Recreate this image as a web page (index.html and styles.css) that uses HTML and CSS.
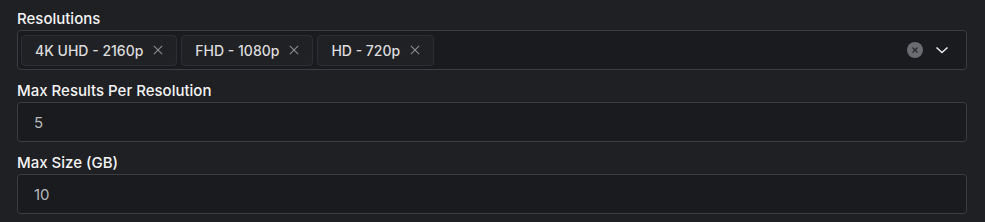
FILE: index.html
```html
<!DOCTYPE html>
<html lang="en">
<head>
	<title>Settings</title>
	<meta charset="UTF-8">
	<link rel="stylesheet" href="styles.css">
</head>
<body>
	<div class="polje">
		<label class="naziv">Resolutions</label>
		<div class="unos multi">
			<div class="tagovi">
				<span class="tag">4K UHD - 2160p
					<svg class="ukloni" viewBox="0 0 12 12"><path d="M1 1L11 11M11 1L1 11"/></svg>
				</span>
				<span class="tag">FHD - 1080p
					<svg class="ukloni" viewBox="0 0 12 12"><path d="M1 1L11 11M11 1L1 11"/></svg>
				</span>
				<span class="tag">HD - 720p
					<svg class="ukloni" viewBox="0 0 12 12"><path d="M1 1L11 11M11 1L1 11"/></svg>
				</span>
			</div>
			<div class="desno">
				<svg class="obrisi" viewBox="0 0 16 16"><circle cx="8" cy="8" r="8"/><path d="M5.5 5.5L10.5 10.5M10.5 5.5L5.5 10.5"/></svg>
				<svg class="strelica" viewBox="0 0 16 16"><path d="M2.5 5.5L8 10.5L13.5 5.5"/></svg>
			</div>
		</div>
	</div>
	<div class="polje">
		<label class="naziv">Max Results Per Resolution</label>
		<div class="unos">5</div>
	</div>
	<div class="polje">
		<label class="naziv">Max Size (GB)</label>
		<div class="unos">10</div>
	</div>
</body>
</html>
```
FILE: styles.css
```css
body{
	margin: 0;
	padding: 8px 18px 0 17px;
	background-color: #1f2023;
	font-family: Inter, "Noto Sans", sans-serif;
	font-size: 14px;
	color: #c1c2c5;
}
.polje{
	display: flex;
	flex-direction: column;
	margin-bottom: 10px;
}
.naziv{
	font-weight: 500;
	font-size: 15px;
	color: #f4f4f5;
	line-height: 22px;
	height: 22px;
}
.unos{
	box-sizing: border-box;
	height: 40px;
	border: 1px solid #3b3d42;
	border-radius: 4px;
	background-color: #1a1b1e;
	display: flex;
	align-items: center;
	padding: 0 16px;
	color: #b8b9bc;
	font-size: 15px;
}
.multi{
	padding: 0 16px 0 3px;
	justify-content: space-between;
}
.tagovi{
	display: flex;
	gap: 4px;
}
.tag{
	box-sizing: border-box;
	height: 31px;
	display: flex;
	align-items: center;
	gap: 10px;
	padding: 0 13px;
	background-color: #202124;
	border: 1px solid #2c2e33;
	border-radius: 4px;
	color: #dcdcde;
	font-weight: 500;
	font-size: 14px;
}
.ukloni{
	width: 10px;
	height: 10px;
	stroke: #8c8e93;
	stroke-width: 1.3;
	fill: none;
}
.desno{
	display: flex;
	align-items: center;
	gap: 11px;
}
.obrisi{
	width: 16px;
	height: 16px;
}
.obrisi circle{
	fill: #6a6c72;
}
.obrisi path{
	stroke: #2a2b2e;
	stroke-width: 1.4;
	fill: none;
}
.strelica{
	width: 16px;
	height: 16px;
	stroke: #e8e8ea;
	stroke-width: 1.6;
	fill: none;
}
```
